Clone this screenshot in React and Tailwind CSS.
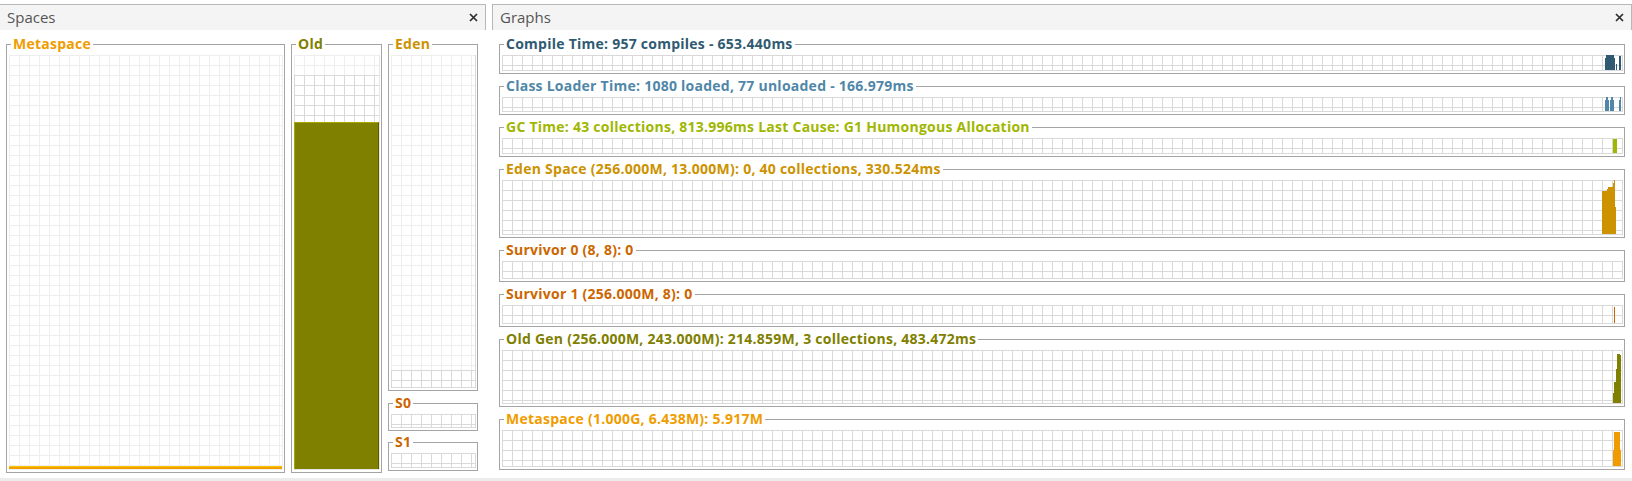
import React from "react";

const GRID_DARK =
  "bg-[linear-gradient(to_right,#d9d9d9_1px,transparent_1px),linear-gradient(to_bottom,#d9d9d9_1px,transparent_1px)] bg-[size:10px_10px] border-r border-b border-[#d9d9d9]";
const GRID_LIGHT =
  "bg-[linear-gradient(to_right,#eeeeee_1px,transparent_1px),linear-gradient(to_bottom,#eeeeee_1px,transparent_1px)] bg-[size:10px_10px] border-r border-b border-[#eeeeee]";

function CloseIcon() {
  return (
    <svg width="9" height="9" viewBox="0 0 9 9">
      <path d="M1 1L8 8M8 1L1 8" stroke="#2d2d2d" strokeWidth="1.7" />
    </svg>
  );
}

function PanelHeader({ title, className }) {
  return (
    <div
      className={
        "h-[26px] shrink-0 border-t border-[#b8b8b8] bg-[#f4f4f4] flex items-center justify-between pl-[7px] pr-[7px] " +
        className
      }
    >
      <span className="text-[15px] text-[#555] leading-none">{title}</span>
      <CloseIcon />
    </div>
  );
}

function Box({ title, color, className, style, children }) {
  return (
    <div
      className={
        "relative border border-[#a4a4a4] pt-[10px] pl-[2px] pr-[1px] pb-[2px] flex flex-col " +
        className
      }
      style={style}
    >
      <span
        className="absolute left-[4px] -top-[9px] bg-white px-[2px] text-[14px] tracking-[0.25px] font-bold leading-[16px] whitespace-nowrap"
        style={{ color }}
      >
        {title}
      </span>
      {children}
    </div>
  );
}

// bars: [x (absolute page x), width, height from bottom]
function Graph({ title, color, h, bars }) {
  const gh = h - 2 - 12 - 1;
  return (
    <Box title={title} color={color} className="shrink-0" style={{ height: h }}>
      <div className={"relative flex-1 " + GRID_DARK}>
        <svg
          className="absolute right-0 bottom-0"
          width="21"
          height={gh}
          viewBox={`0 0 21 ${gh}`}
        >
          {bars.map(([x, w, bh], i) => (
            <rect
              key={i}
              x={x - 1601}
              y={gh - Math.min(bh, gh)}
              width={w}
              height={Math.min(bh, gh)}
              fill={color}
            />
          ))}
        </svg>
      </div>
    </Box>
  );
}

const graphs = [
  {
    title: "Compile Time: 957 compiles - 653.440ms",
    color: "#2f5a72",
    h: 30,
    bars: [
      [1605, 1, 12],
      [1606, 8, 15],
      [1614, 1, 12],
      [1616, 1, 6],
      [1619, 2, 14],
    ],
  },
  {
    title: "Class Loader Time: 1080 loaded, 77 unloaded - 166.979ms",
    color: "#5087a8",
    h: 29,
    bars: [
      [1605, 1, 11],
      [1606, 2, 15],
      [1608, 1, 11],
      [1610, 1, 11],
      [1611, 2, 15],
      [1613, 1, 11],
      [1619, 1, 11],
      [1620, 1, 14],
    ],
  },
  {
    title: "GC Time: 43 collections, 813.996ms Last Cause: G1 Humongous Allocation",
    color: "#9fb700",
    h: 30,
    bars: [[1613, 4, 14]],
  },
  {
    title: "Eden Space (256.000M, 13.000M): 0, 40 collections, 330.524ms",
    color: "#cc9200",
    h: 69,
    bars: [
      [1602, 5, 43],
      [1607, 1, 45],
      [1608, 5, 47],
      [1613, 1, 51],
      [1614, 1, 55],
      [1615, 1, 27],
    ],
  },
  {
    title: "Survivor 0 (8, 8): 0",
    color: "#cc6600",
    h: 32,
    bars: [],
  },
  {
    title: "Survivor 1 (256.000M, 8): 0",
    color: "#cc6600",
    h: 33,
    bars: [[1614, 1, 16]],
  },
  {
    title: "Old Gen (256.000M, 243.000M): 214.859M, 3 collections, 483.472ms",
    color: "#7f7f00",
    h: 68,
    bars: [
      [1613, 1, 10],
      [1614, 2, 21],
      [1616, 1, 34],
      [1617, 3, 49],
      [1620, 1, 48],
    ],
  },
  {
    title: "Metaspace (1.000G, 6.438M): 5.917M",
    color: "#f09c00",
    h: 51,
    bars: [
      [1613, 1, 16],
      [1614, 6, 34],
      [1620, 1, 16],
    ],
  },
];

export default function App() {
  return (
    <div className="w-[1632px] h-[481px] bg-white flex flex-col font-['Open_Sans',sans-serif] overflow-hidden">
      <div className="flex flex-1 pt-[4px] min-h-0">
        {/* Spaces */}
        <section className="w-[486px] shrink-0 flex flex-col">
          <PanelHeader title="Spaces" className="border-r" />
          <div className="flex-1 flex gap-[6px] pl-[6px] pt-[14px] pb-[5px]">
            <Box title="Metaspace" color="#f09c00" className="w-[279px]">
              <div className={"flex-1 flex flex-col justify-end " + GRID_LIGHT}>
                <div className="h-[3px] border-t border-[#ffc400] bg-[#f0a000]" />
              </div>
            </Box>
            <Box title="Old" color="#7f7f00" className="w-[91px]">
              <div className="flex-1 flex flex-col border-r border-b border-[#e6e6e6]">
                <div className="h-[20px] bg-[linear-gradient(to_right,#eeeeee_1px,transparent_1px),linear-gradient(to_bottom,#eeeeee_1px,transparent_1px)] bg-[size:10px_10px]" />
                <div className="h-[47px] bg-[linear-gradient(to_right,#d9d9d9_1px,transparent_1px),linear-gradient(to_bottom,#d9d9d9_1px,transparent_1px)] bg-[size:10px_10px]" />
                <div className="flex-1 bg-[#808000] border-t border-l border-[#a8a800] border-r border-r-[#5c5c00]" />
              </div>
            </Box>
            <div className="w-[90px] flex flex-col">
              <Box title="Eden" color="#cc9200" className="h-[347px]">
                <div className="flex-1 flex flex-col border-r border-b border-[#d9d9d9]">
                  <div className="flex-1 bg-[linear-gradient(to_right,#eeeeee_1px,transparent_1px),linear-gradient(to_bottom,#eeeeee_1px,transparent_1px)] bg-[size:10px_10px]" />
                  <div className="h-[17px] bg-[linear-gradient(to_right,#d9d9d9_1px,transparent_1px),linear-gradient(to_bottom,#d9d9d9_1px,transparent_1px)] bg-[size:10px_10px]" />
                </div>
              </Box>
              <Box title="S0" color="#cc6600" className="h-[28px] mt-[12px]">
                <div className={"flex-1 " + GRID_DARK} />
              </Box>
              <Box title="S1" color="#cc6600" className="h-[29px] mt-[11px]">
                <div className={"flex-1 " + GRID_DARK} />
              </Box>
            </div>
          </div>
        </section>

        <div className="w-[6px] shrink-0" />

        {/* Graphs */}
        <section className="flex-1 flex flex-col">
          <PanelHeader title="Graphs" className="border-l border-r" />
          <div className="flex-1 flex flex-col gap-[12px] pl-[7px] pr-[7px] pt-[14px]">
            {graphs.map((g) => (
              <Graph key={g.title} {...g} />
            ))}
          </div>
        </section>
      </div>
      <div className="h-[3px] shrink-0 bg-[#ececec]" />
    </div>
  );
}
